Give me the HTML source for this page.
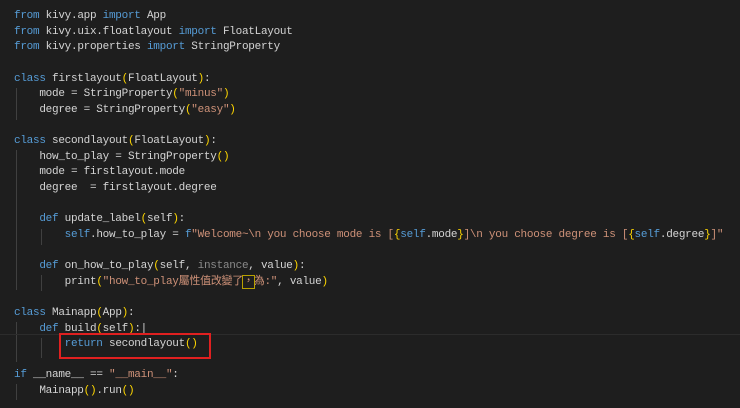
<!DOCTYPE html>
<html><head><meta charset="utf-8"><style>
html,body{margin:0;padding:0;background:#1e1e1e;width:740px;height:408px;overflow:hidden}
pre{margin:0;position:absolute;left:14px;top:9px;font-family:"Liberation Mono","Noto Sans CJK TC",monospace;font-size:11px;line-height:15.63px;color:#d4d4d4;letter-spacing:-0.27px}
.k{color:#569cd6}.s{color:#ce9178}.p{color:#ffd700}.v{color:#9cdcfe}.g{color:#8a8a8a}.f{color:#dcdcaa}
.guide{position:absolute;width:1px;background:#404040}
.box{position:absolute;left:59px;top:333px;width:152px;height:26px;border:2px solid #e02020;box-sizing:border-box}
.cl{position:absolute;left:0;top:334px;width:740px;height:0;border-top:1px solid #2c2c2c}
</style></head><body>
<div class="guide" style="left:16px;top:88px;height:32px"></div>
<div class="guide" style="left:16px;top:150px;height:140px"></div>
<div class="guide" style="left:41px;top:229px;height:16px"></div>
<div class="guide" style="left:41px;top:275px;height:16px"></div>
<div class="guide" style="left:16px;top:322px;height:40px"></div>
<div class="guide" style="left:41px;top:338px;height:20px"></div>
<div class="guide" style="left:16px;top:384px;height:16px"></div>
<div class="cl"></div>
<pre><span class="k">from</span> kivy.app <span class="k">import</span> App
<span class="k">from</span> kivy.uix.floatlayout <span class="k">import</span> FloatLayout
<span class="k">from</span> kivy.properties <span class="k">import</span> StringProperty

<span class="k">class</span> firstlayout<span class="p">(</span>FloatLayout<span class="p">)</span>:
    mode = StringProperty<span class="p">(</span><span class="s">"minus"</span><span class="p">)</span>
    degree = StringProperty<span class="p">(</span><span class="s">"easy"</span><span class="p">)</span>

<span class="k">class</span> secondlayout<span class="p">(</span>FloatLayout<span class="p">)</span>:
    how_to_play = StringProperty<span class="p">()</span>
    mode = firstlayout.mode
    degree  = firstlayout.degree

    <span class="k">def</span> update_label<span class="p">(</span>self<span class="p">)</span>:
        <span class="k">self</span>.how_to_play = <span class="k">f</span><span class="s">"Welcome~\n you choose mode is [</span><span class="p">{</span><span class="k">self</span>.mode<span class="p">}</span><span class="s">]\n you choose degree is [</span><span class="p">{</span><span class="k">self</span>.degree<span class="p">}</span><span class="s">]"</span>

    <span class="k">def</span> on_how_to_play<span class="p">(</span>self, <span class="g">instance</span>, value<span class="p">)</span>:
        print<span class="p">(</span><span class="s">"how_to_play屬性值改變了<span style="outline:1px solid #b8a000">，</span>為:"</span>, value<span class="p">)</span>

<span class="k">class</span> Mainapp<span class="p">(</span>App<span class="p">)</span>:
    <span class="k">def</span> build<span class="p">(</span>self<span class="p">)</span>:|
        <span class="k">return</span> secondlayout<span class="p">()</span>

<span class="k">if</span> __name__ == <span class="s">"__main__"</span>:
    Mainapp<span class="p">()</span>.run<span class="p">()</span>
</pre>
<div class="box"></div>
</body></html>
